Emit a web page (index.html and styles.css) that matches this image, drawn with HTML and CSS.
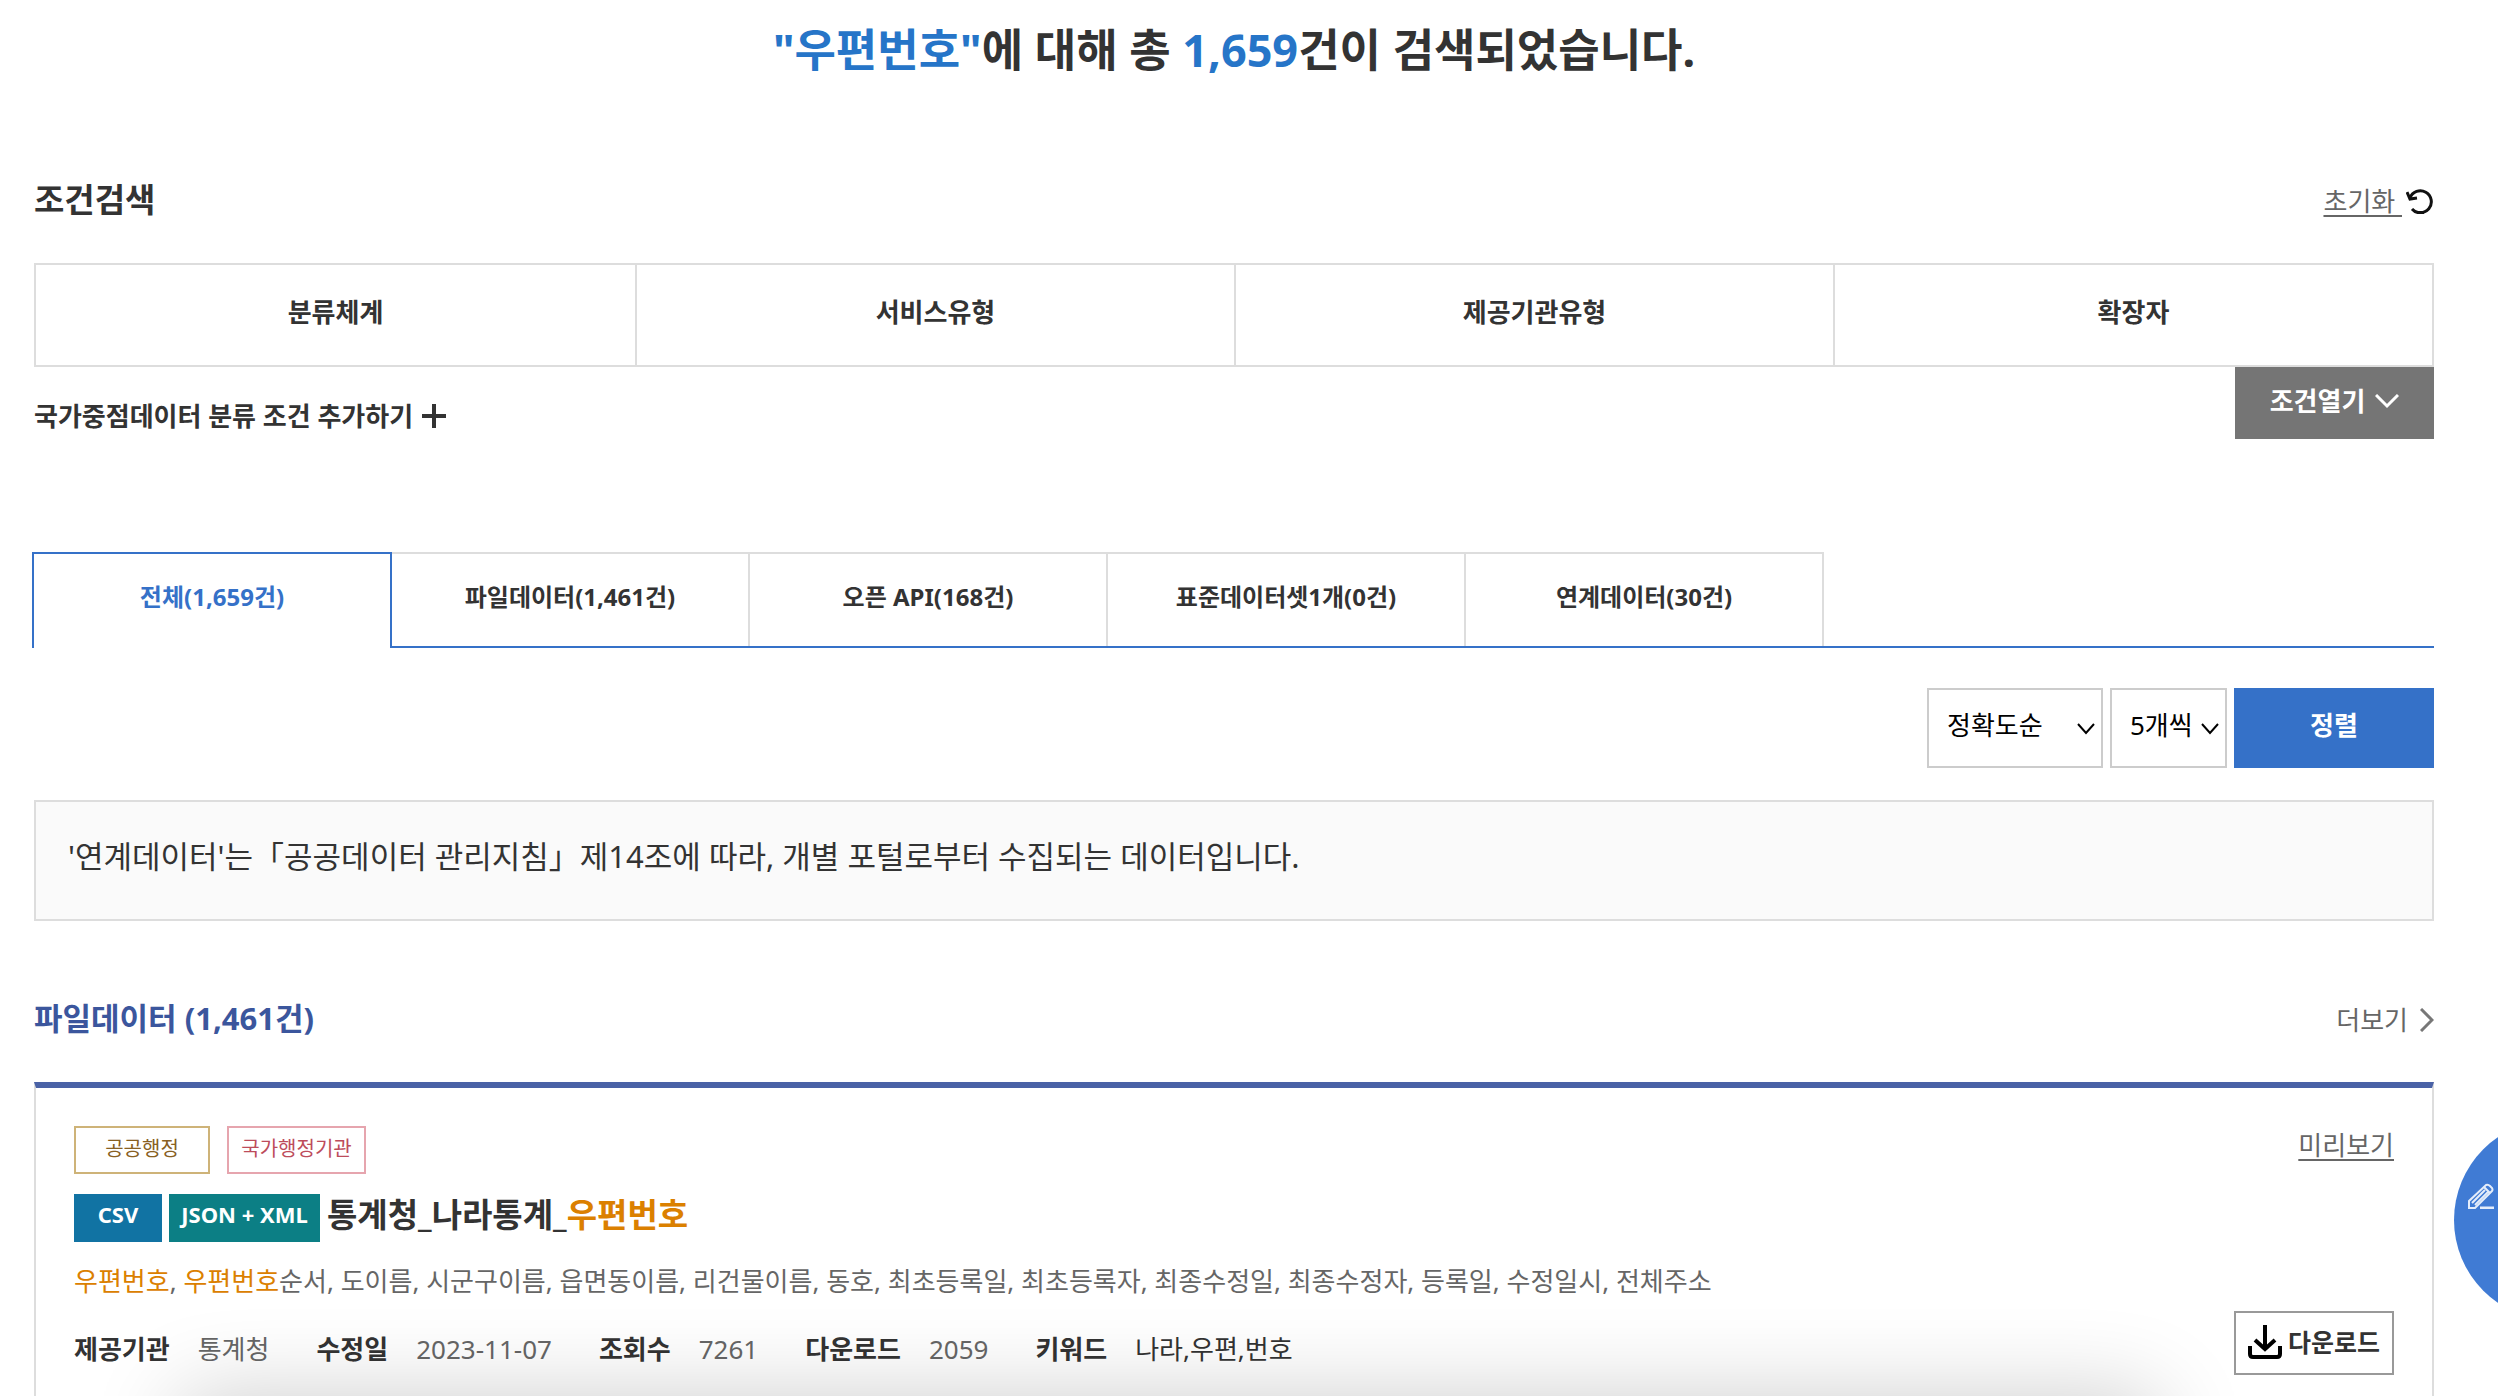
FILE: index.html
```html
<!DOCTYPE html>
<html lang="ko">
<head>
    <meta charset="UTF-8">
    <meta name="viewport" content="width=device-width, initial-scale=1.0">
    <title>우편번호 검색결과</title>
    <link rel="stylesheet" href="styles.css">
</head>
<body>
    <main class="container">
        <h1 class="result-title"><span class="point">"우편번호"</span>에 대해 총 <span class="point">1,659</span>건이 검색되었습니다.</h1>

        <!-- 조건검색 -->
        <section class="condition">
            <div class="condition-head">
                <h2>조건검색</h2>
                <a href="#" class="reset">
                    <span>초기화&nbsp;</span>
                    <svg width="28" height="26" viewBox="0 0 28 26" fill="none" stroke="#111" stroke-width="3">
                        <path d="M4 10A11 11 0 1 1 6 21Q9 24 12 24.500H18"/>
                        <path d="M1 4l3 7 7-1"/>
                    </svg>
                </a>
            </div>
            <div class="condition-list">
                <button type="button">분류체계</button>
                <button type="button">서비스유형</button>
                <button type="button">제공기관유형</button>
                <button type="button">확장자</button>
            </div>
            <div class="condition-foot">
                <button type="button" class="add-condition">국가중점데이터 분류 조건 추가하기
                    <svg width="24" height="24" viewBox="0 0 24 24" stroke="#333" stroke-width="4">
                        <path d="M0 12h24M12 0v24"/>
                    </svg>
                </button>
                <button type="button" class="open-condition">조건열기
                    <svg width="24" height="15" viewBox="0 0 24 15" fill="none" stroke="#fff" stroke-width="3">
                        <path d="M1 1l11 11L23 1"/>
                    </svg>
                </button>
            </div>
        </section>

        <nav class="tabs">
            <a href="#" class="active">전체(1,659건)</a>
            <a href="#">파일데이터(1,461건)</a>
            <a href="#">오픈 API(168건)</a>
            <a href="#">표준데이터셋1개(0건)</a>
            <a href="#">연계데이터(30건)</a>
        </nav>

        <form class="sort">
            <div class="select-box">
                <select class="sort-type" aria-label="정렬 기준">
                    <option>정확도순</option>
                </select>
                <svg width="18" height="12" viewBox="0 0 18 12" fill="none" stroke="#000" stroke-width="2">
                    <path d="M1 1l8 9 8-9"/>
                </svg>
            </div>
            <div class="select-box">
                <select class="sort-count" aria-label="목록 개수">
                    <option>5개씩</option>
                </select>
                <svg width="18" height="12" viewBox="0 0 18 12" fill="none" stroke="#000" stroke-width="2">
                    <path d="M1 1l8 9 8-9"/>
                </svg>
            </div>
            <button type="button">정렬</button>
        </form>

        <p class="notice">'연계데이터'는「공공데이터 관리지침」제14조에 따라, 개별 포털로부터 수집되는 데이터입니다.</p>

        <!-- 파일데이터 목록 -->
        <section class="result">
            <div class="result-head">
                <h2>파일데이터 (1,461건)</h2>
                <a href="#" class="more">더보기
                    <svg width="14" height="24" viewBox="0 0 14 24" fill="none" stroke="#777" stroke-width="3">
                        <path d="M1 1l11 11L1 23"/>
                    </svg>
                </a>
            </div>
            <article class="item">
                <div class="item-top">
                    <div class="tags">
                        <span class="tag tag-category">공공행정</span>
                        <span class="tag tag-org">국가행정기관</span>
                    </div>
                    <a href="#" class="preview">미리보기</a>
                </div>
                <h3 class="item-title">
                    <span class="format csv">CSV</span>
                    <span class="format json">JSON + XML</span>
                    <a href="#">통계청_나라통계_<span class="keyword">우편번호</span></a>
                </h3>
                <p class="desc"><span class="keyword">우편번호</span>, <span class="keyword">우편번호</span>순서, 도이름, 시군구이름, 읍면동이름, 리건물이름, 동호, 최초등록일, 최초등록자, 최종수정일, 최종수정자, 등록일, 수정일시, 전체주소</p>
                <div class="item-bottom">
                    <dl class="info">
                        <div><dt>제공기관</dt><dd>통계청</dd></div>
                        <div><dt>수정일</dt><dd>2023-11-07</dd></div>
                        <div><dt>조회수</dt><dd>7261</dd></div>
                        <div><dt>다운로드</dt><dd>2059</dd></div>
                        <div><dt>키워드</dt><dd class="dark">나라,우편,번호</dd></div>
                    </dl>
                    <button type="button" class="download">
                        <svg width="34" height="34" viewBox="0 0 34 34" fill="none" stroke="#000" stroke-width="4">
                            <path d="M17 0v24M7 15l10 9 10-9"/>
                            <path d="M2 21v8q0 3 3 3h24q3 0 3-3v-8"/>
                        </svg>
                        다운로드
                    </button>
                </div>
            </article>
        </section>
    </main>

    <button type="button" class="floating" aria-label="의견 쓰기">
        <svg width="26" height="26" viewBox="0 0 26 26" fill="none" stroke="#e4edfa" stroke-width="2">
            <path d="M1 25v-7L18 2q2-1 4 1l2 2q1 2 0 3L7 25z"/>
            <path d="M4 20L17 7M7 22L20 9M16 4l6 6"/>
            <path d="M12 25h14" stroke-width="3"/>
        </svg>
    </button>
    <div class="bottom-shadow"></div>
</body>
</html>
```

FILE: styles.css
```css
* {
    margin: 0;
    padding: 0;
    box-sizing: border-box;
}

body {
    background-color: #fff;
    color: #333;
    font-family: "Noto Sans", "Noto Sans CJK KR", sans-serif;
    font-size: 26px;
    line-height: 36px;
    overflow: hidden;
}

button,
select {
    font: inherit;
    color: inherit;
    background: none;
    border: none;
    border-radius: 0;
    cursor: pointer;
}

a {
    color: inherit;
    text-decoration: none;
}

svg {
    display: block;
    flex: none;
}

h2 {
    font-size: 33px;
    line-height: 48px;
}

.container {
    padding: 20px 64px 0 34px;
}

.result-title {
    font-size: 45px;
    line-height: 60px;
    text-align: center;
}

.point {
    color: #2675c8;
}

/* 조건검색 */
.condition {
    margin-top: 96px;
}

.condition-head,
.result-head {
    display: flex;
    justify-content: space-between;
    align-items: center;
}

.reset {
    display: flex;
    align-items: center;
    gap: 4px;
    padding-top: 2px;
    color: #666;
}

.reset span,
.preview {
    text-decoration: underline;
    text-decoration-thickness: 2px;
    text-underline-offset: 4px;
}

.condition-list {
    display: grid;
    grid-template-columns: repeat(4, 1fr);
    height: 104px;
    margin-top: 39px;
    border: 2px solid #ddd;
}

.condition-list button {
    padding-bottom: 6px;
    font-weight: bold;
}

.condition-list button + button {
    border-left: 2px solid #ddd;
}

.condition-foot {
    display: flex;
    justify-content: space-between;
    align-items: flex-start;
}

.add-condition {
    display: flex;
    align-items: center;
    gap: 9px;
    padding-top: 31px;
    font-weight: bold;
}

.open-condition {
    display: flex;
    justify-content: center;
    align-items: center;
    gap: 10px;
    width: 199px;
    height: 72px;
    padding-bottom: 4px;
    background-color: #757575;
    color: #fff;
    font-weight: bold;
}

/* 탭 */
.tabs {
    display: flex;
    height: 96px;
    margin-top: 113px;
    border-bottom: 2px solid #3571c8;
}

.tabs a {
    width: 358px;
    padding-top: 25px;
    border-top: 2px solid #ddd;
    border-right: 2px solid #ddd;
    font-size: 24px;
    font-weight: bold;
    text-align: center;
}

.tabs .active {
    width: 360px;
    height: 96px;
    margin-left: -2px;
    border: 2px solid #3571c8;
    border-bottom: none;
    background-color: #fff;
    color: #3571c8;
}

/* 정렬 */
.sort {
    display: flex;
    justify-content: flex-end;
    gap: 7px;
    margin-top: 40px;
}

.select-box {
    position: relative;
}

.select-box select {
    height: 80px;
    padding: 0 18px 6px;
    border: 2px solid #ccc;
    color: #000;
    appearance: none;
}

.select-box svg {
    position: absolute;
    top: 35px;
    right: 8px;
    pointer-events: none;
}

.sort-type {
    width: 176px;
}

.sort-count {
    width: 117px;
}

.sort button {
    width: 200px;
    height: 80px;
    padding-bottom: 6px;
    background-color: #3571c8;
    color: #fff;
    font-weight: bold;
}

.notice {
    margin-top: 32px;
    padding: 32px 32px 40px;
    border: 2px solid #ddd;
    background-color: #fafafa;
    font-size: 31px;
    line-height: 45px;
}

/* 파일데이터 목록 */
.result {
    margin-top: 73px;
}

.result-head h2 {
    color: #3b569d;
    font-size: 31px;
}

.more {
    display: flex;
    align-items: center;
    gap: 12px;
    padding-top: 4px;
    color: #666;
}

.item {
    margin-top: 40px;
    padding: 38px 38px 60px;
    border: 2px solid #ddd;
    border-top: 6px solid #4a62a6;
}

.item-top {
    display: flex;
    justify-content: space-between;
    align-items: flex-start;
}

.tags {
    display: flex;
    gap: 17px;
}

.tag {
    height: 48px;
    border: 2px solid;
    font-size: 20px;
    line-height: 42px;
    text-align: center;
}

.tag-category {
    width: 136px;
    border-color: #ceb378;
    color: #886022;
}

.tag-org {
    width: 139px;
    border-color: #e6a5ae;
    color: #bd4c5b;
}

.preview {
    padding-top: 1px;
    color: #666;
}

.item-title {
    display: flex;
    gap: 7px;
    margin-top: 20px;
    font-size: 33px;
    line-height: 42px;
}

.format {
    height: 48px;
    color: #fff;
    font-size: 22px;
    line-height: 40px;
    text-align: center;
}

.csv {
    width: 88px;
    background-color: #1173a3;
}

.json {
    width: 151px;
    background-color: #0c7f85;
}

.keyword {
    color: #db8000;
}

.desc {
    margin-top: 21px;
    color: #666;
}

.item-bottom {
    display: flex;
    justify-content: space-between;
    align-items: flex-start;
    margin-top: 12px;
}

.info {
    display: flex;
    gap: 47px;
    padding-top: 20px;
}

.info div {
    display: flex;
    gap: 28px;
}

.info dt {
    font-weight: bold;
}

.info dd {
    color: #666;
}

.info .dark {
    color: #333;
}

.download {
    display: flex;
    justify-content: center;
    align-items: center;
    gap: 6px;
    width: 160px;
    height: 64px;
    padding-bottom: 2px;
    border: 2px solid #999;
    background-color: #fff;
    font-size: 25px;
    font-weight: bold;
}

/* 화면 오른쪽 의견 버튼 */
.floating {
    position: fixed;
    right: -156px;
    bottom: 76px;
    width: 200px;
    height: 200px;
    padding: 0 0 48px 14px;
    border-radius: 50%;
    background-color: #407bd4;
}

.bottom-shadow {
    position: fixed;
    right: 340px;
    bottom: -100px;
    left: 180px;
    height: 100px;
    box-shadow: 0 0 90px rgba(0, 0, 0, 0.2);
    pointer-events: none;
}
```
